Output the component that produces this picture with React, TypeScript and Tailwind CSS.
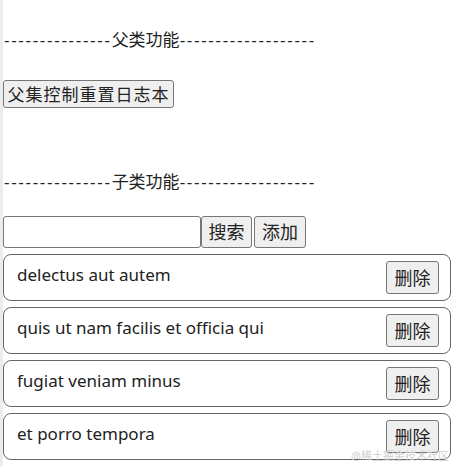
const items = [
  "delectus aut autem",
  "quis ut nam facilis et officia qui",
  "fugiat veniam minus",
  "et porro tempora",
];

const btn =
  "bg-[#efefef] border border-[#767676] rounded-[3px] text-[#222] leading-none";

function Divider({ label }: { label: string }) {
  return (
    <p className="pl-px leading-[24px] whitespace-nowrap">
      <span className="tracking-[1.7px]">---------------</span>
      {label}
      <span className="tracking-[1.7px]">-------------------</span>
    </p>
  );
}

export default function App() {
  return (
    <div
      className="relative min-h-screen bg-white border-l-[3px] border-[#ececec] text-[17px] text-[#222]"
      style={{ fontFamily: '"Noto Sans", "Noto Sans CJK SC", sans-serif' }}
    >
      <div className="pt-[28px]">
        <Divider label="父类功能" />
        <button className={`${btn} mt-[28px] h-[28px] w-[171px] text-[17px] tracking-[1px]`}>
          父集控制重置日志本
        </button>
      </div>
      <div className="pt-[62px]">
        <Divider label="子类功能" />
        <div className="mt-[22px] flex items-center">
          <input className="w-[198px] h-[32px] border border-[#767676] rounded-[3px] outline-none" />
          <button className={`${btn} h-[32px] w-[51px] text-[18px]`}>搜索</button>
          <button className={`${btn} ml-[2px] h-[32px] w-[52px] text-[18px]`}>添加</button>
        </div>
        <ul className="mt-[6px] mr-px flex flex-col gap-[6px]">
          {items.map((t) => (
            <li
              key={t}
              className="h-[47px] border border-[#666] rounded-[8px] flex justify-between items-start pl-[13px] pr-[11px]"
            >
              <span className="mt-[8px] leading-[24px]">{t}</span>
              <button className={`${btn} mt-[6px] h-[33px] w-[53px] text-[18px]`}>删除</button>
            </li>
          ))}
        </ul>
      </div>
      {/* watermark */}
      <span className="absolute right-[3px] top-[450px] text-[11px] leading-none text-[#d0d0d0] pointer-events-none">
        @稀土掘金技术社区
      </span>
    </div>
  );
}
